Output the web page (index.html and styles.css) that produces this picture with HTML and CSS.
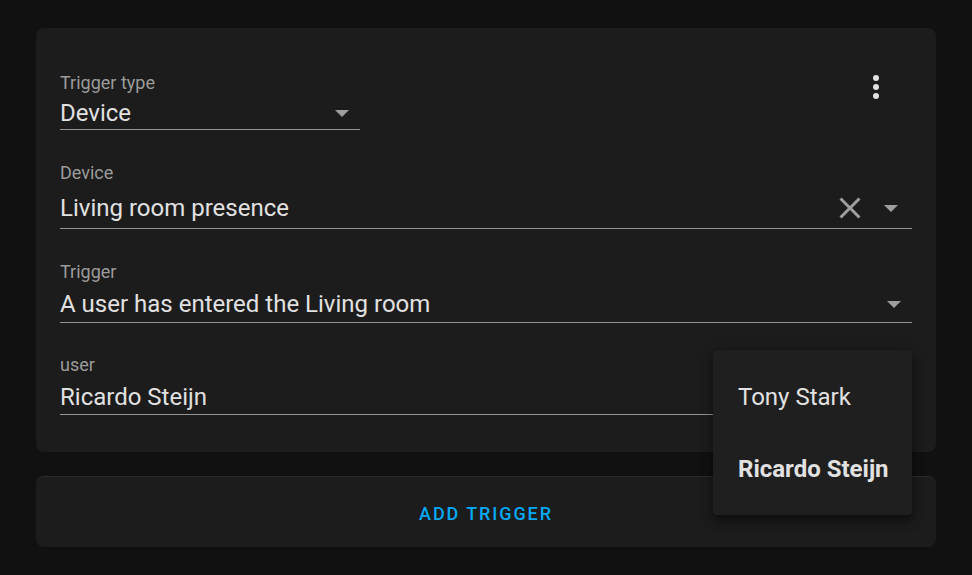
FILE: index.html
```html
<!DOCTYPE html>
<html>
<head>
<meta charset="utf-8">
<link rel="stylesheet" href="styles.css">
</head>
<body>
<div class="page">
  <div class="card main">
    <div class="top-row">
      <div class="field f1 narrow">
        <div class="label">Trigger type</div>
        <div class="value-row">
          <span class="value">Device</span>
          <span class="arrow a1"></span>
        </div>
      </div>
      <button class="kebab" aria-label="menu">
        <span class="dot"></span><span class="dot"></span><span class="dot"></span>
      </button>
    </div>
    <div class="field f2">
      <div class="label">Device</div>
      <div class="value-row tall">
        <span class="value">Living room presence</span>
        <svg class="clear" viewBox="0 0 24 24" width="36" height="36"><path fill="#9e9e9e" d="M19,6.41L17.59,5L12,10.59L6.41,5L5,6.41L10.59,12L5,17.59L6.41,19L12,13.41L17.59,19L19,17.59L13.41,12L19,6.41Z"/></svg>
        <span class="arrow a2"></span>
      </div>
    </div>
    <div class="field f3">
      <div class="label">Trigger</div>
      <div class="value-row">
        <span class="value">A user has entered the Living room</span>
        <span class="arrow a3"></span>
      </div>
    </div>
    <div class="field f4">
      <div class="label">user</div>
      <div class="value-row">
        <span class="value">Ricardo Steijn</span>
      </div>
    </div>
  </div>
  <div class="card footer">
    <button class="add">ADD TRIGGER</button>
  </div>
  <div class="menu">
    <div class="item">Tony Stark</div>
    <div class="item selected">Ricardo Steijn</div>
  </div>
</div>
</body>
</html>
```
FILE: styles.css
```css
* { box-sizing: border-box; }
html, body { margin: 0; padding: 0; }
body {
  background: #111111;
  font-family: Roboto, "Noto Sans", sans-serif;
  width: 972px;
  height: 575px;
  overflow: hidden;
}
.page {
  position: relative;
  padding: 28px 36px;
}
.card {
  background: #1c1c1c;
  border-radius: 8px;
}
.main {
  padding: 35px 24px 37px 24px;
  display: flex;
  flex-direction: column;
}
.top-row {
  display: flex;
  justify-content: space-between;
  align-items: flex-start;
}
.field {
  border-bottom: 1px solid #949494;
}
.label {
  font-size: 18px;
  line-height: 20px;
  height: 20px;
  color: #9b9b9b;
}
.value-row {
  display: flex;
  align-items: center;
  height: 28px;
}
.value {
  flex: 1;
  font-size: 24px;
  line-height: 28px;
  color: #e1e1e1;
  white-space: nowrap;
}
.arrow {
  width: 0;
  height: 0;
  border-left: 7px solid transparent;
  border-right: 7px solid transparent;
  border-top: 7px solid #9e9e9e;
}
.f1 { width: 300px; padding-top: 10px; padding-bottom: 2px; }
.f1 .value-row { margin-top: 6px; }
.a1 { margin-right: 11px; }
.f2 { margin-top: 33px; padding-bottom: 0; }
.f2 .value-row.tall { height: 40px; margin-top: 5px; }
.clear { margin-right: 16px; }
.a2 { margin-right: 14px; }
.f3 { margin-top: 33px; padding-bottom: 4px; }
.f3 .value-row { margin-top: 8px; }
.a3 { margin-right: 11px; }
.f4 { margin-top: 32px; padding-bottom: 3px; }
.f4 .value-row { margin-top: 8px; }
.kebab {
  width: 48px;
  height: 48px;
  margin-right: 12px;
  background: none;
  border: 0;
  padding: 0;
  display: flex;
  flex-direction: column;
  align-items: center;
  justify-content: center;
  gap: 3px;
}
.dot {
  width: 6px;
  height: 6px;
  border-radius: 50%;
  background: #e1e1e1;
}
.footer {
  margin-top: 24px;
  height: 71px;
  border-top: 1px solid #2c2c2c;
  display: flex;
  align-items: center;
  justify-content: center;
}
.add {
  background: none;
  border: 0;
  color: #03a9f4;
  font-family: Roboto, sans-serif;
  font-weight: 500;
  font-size: 18px;
  letter-spacing: 1.9px;
  padding: 0;
  margin-top: 3px;
  margin-left: 0;
}
.menu {
  position: absolute;
  left: 713px;
  top: 350px;
  width: 199px;
  height: 165px;
  padding: 11px 0 10px;
  background: #1f1f1f;
  border-radius: 4px;
  box-shadow: 0 5px 5px -3px rgba(0,0,0,0.3), 0 8px 10px 1px rgba(0,0,0,0.2), 0 3px 14px 2px rgba(0,0,0,0.18);
}
.item {
  height: 72px;
  display: flex;
  align-items: center;
  padding-left: 25px;
  font-size: 24px;
  color: #e1e1e1;
}
.item.selected { font-weight: 700; }
```
